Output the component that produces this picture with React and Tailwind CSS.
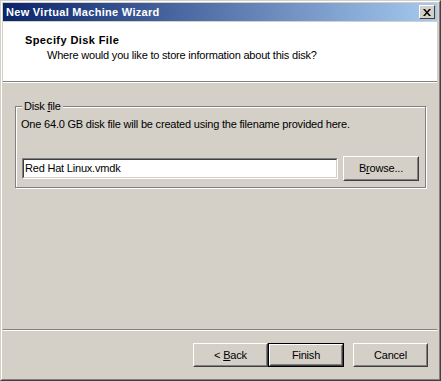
import React from "react";

const font = { fontFamily: '"Liberation Sans", Arial, sans-serif' };

function Btn({ children, isDefault, className = "" }) {
  const inner = (
    <div className="h-full w-full border border-t-white border-l-white border-r-[#404040] border-b-[#404040]">
      <div className="h-full w-full border border-t-[#d4d0c8] border-l-[#d4d0c8] border-r-[#808080] border-b-[#808080] flex items-center justify-center text-[11px] tracking-[-0.2px] text-black">
        {children}
      </div>
    </div>
  );
  if (isDefault) {
    return <div className={"border border-black " + className}>{inner}</div>;
  }
  return <div className={className}>{inner}</div>;
}

export default function App() {
  return (
    <div
      className="w-[441px] h-[381px] bg-[#d4d0c8] border border-t-[#d4d0c8] border-l-[#d4d0c8] border-r-[#404040] border-b-[#404040]"
      style={font}
    >
      <div className="h-full w-full border border-t-white border-l-white border-r-[#808080] border-b-[#808080] pt-px pl-px pr-[2px] pb-[2px] flex flex-col">
        {/* Title bar */}
        <div className="h-[18px] flex items-center justify-between pl-[3px] pr-[2px] bg-[linear-gradient(to_right,#0a246a,#a6caf0)]">
          <span className="text-white font-bold text-[11px] tracking-[0.3px] leading-none">New Virtual Machine Wizard</span>
          <div className="w-[16px] h-[14px] bg-[#d4d0c8] border border-t-white border-l-white border-r-[#404040] border-b-[#404040] flex items-center justify-center">
            <svg width="8" height="7" viewBox="0 0 8 7">
              <path d="M0 0h2l2 2.5L6 0h2L5 3.5 8 7H6L4 4.5 2 7H0l3-3.5z" fill="#000" />
            </svg>
          </div>
        </div>
        {/* Header */}
        <div className="h-[59px] bg-white mt-px pt-[12px] pl-[22px]">
          <div className="text-[11px] leading-[13px] font-bold tracking-[0.4px] text-black">Specify Disk File</div>
          <div className="text-[11px] leading-[13px] tracking-[-0.2px] text-black pl-[22px] mt-[2px]">
            Where would you like to store information about this disk?
          </div>
        </div>
        <div className="h-px bg-[#808080]" />
        <div className="h-px bg-white" />
        {/* Body */}
        <div className="flex-1 flex flex-col">
          <div className="mt-[23px] ml-[12px] mr-[11px] h-[82px] relative border border-[#808080] shadow-[inset_1px_1px_0_#fff,1px_1px_0_#fff]">
            <div className="absolute -top-[7px] left-[6px] bg-[#d4d0c8] px-[2px] text-[11px] leading-[13px] tracking-[-0.2px] text-black">
              Disk <span className="underline">f</span>ile
            </div>
            <div className="pt-[11px] pl-[5px] text-[11px] leading-[13px] tracking-[-0.2px] text-black">
              One 64.0 GB disk file will be created using the filename provided here.
            </div>
            <div className="flex items-center mt-[25px] pl-[6px]">
              <div className="w-[316px] h-[21px] border border-t-[#808080] border-l-[#808080] border-r-white border-b-white">
                <div className="h-full w-full bg-white border border-t-[#404040] border-l-[#404040] border-r-[#d4d0c8] border-b-[#d4d0c8] flex items-center pl-[1px] text-[11px] tracking-[-0.2px] text-black">
                  Red Hat Linux.vmdk
                </div>
              </div>
              <Btn className="ml-[5px] w-[76px] h-[25px]">
                <span>B<span className="underline">r</span>owse...</span>
              </Btn>
            </div>
          </div>
          <div className="flex-1" />
          <div className="h-px bg-[#808080]" />
          <div className="h-px bg-white" />
          <div className="h-[46px] flex items-start justify-end pt-[12px] pr-[9px]">
            <Btn className="w-[75px] h-[24px]">
              <span>&lt; <span className="underline">B</span>ack</span>
            </Btn>
            <Btn isDefault className="w-[76px] h-[24px]">
              <span>Finish</span>
            </Btn>
            <Btn className="w-[75px] h-[24px] ml-[9px]">
              <span>Cancel</span>
            </Btn>
          </div>
        </div>
      </div>
    </div>
  );
}
